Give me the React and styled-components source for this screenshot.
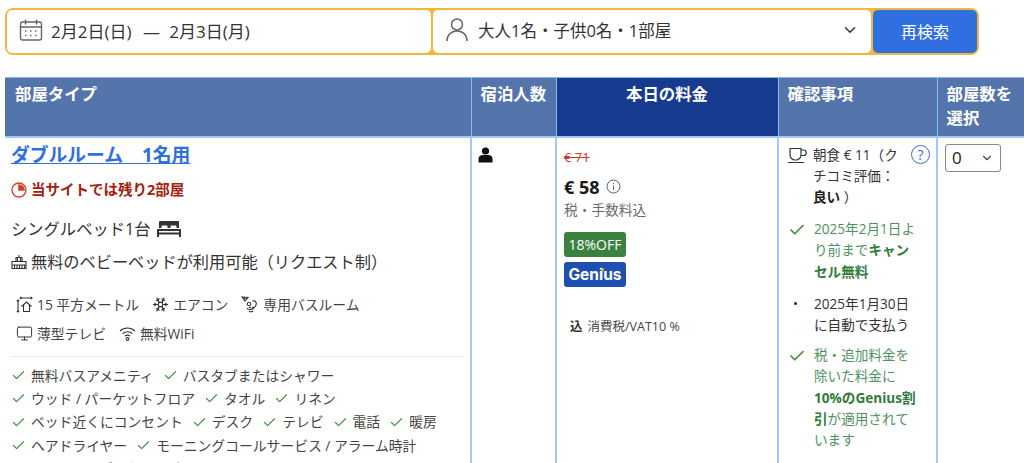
import styled, { createGlobalStyle } from "styled-components";
import { Monitor, Snowflake, ChevronDown, Check } from "lucide-react";

const GlobalStyle = createGlobalStyle`
  html, body {
    margin: 0;
    height: 463px;
    overflow: hidden;
    background: #fff;
  }
  body {
    font-family: "Open Sans", "Noto Sans CJK JP", sans-serif;
    color: #333;
    font-size: 14px;
  }
`;

const Page = styled.div`
  padding: 8px 0 0 5px;
`;

const SearchBar = styled.form`
  display: grid;
  grid-template-columns: 424px 438px 104px;
  gap: 2px;
  width: 974px;
  height: 47px;
  box-sizing: border-box;
  padding: 2px;
  background: #f4b63f;
  border-radius: 8px;
  margin-bottom: 22px;
`;

const Field = styled.div`
  display: flex;
  align-items: center;
  gap: 8px;
  padding: 0 12px 3px;
  background: #fff;
  border-radius: 5px;
  font-size: 17px;
  color: #333;
  white-space: pre;
`;

const Dash = styled.span`
  margin: 0 5px 0 7px;
`;

const GuestField = styled(Field)`
  padding-right: 12px;
  gap: 9px;
  font-size: 16.5px;

  svg:last-child {
    margin-left: auto;
  }
`;

const SearchButton = styled.button`
  border: 0;
  border-radius: 5px;
  background: #2f6fdf;
  color: #fff;
  font: inherit;
  font-size: 16px;
  padding: 0 0 2px;
`;

const Table = styled.table`
  table-layout: fixed;
  width: 1024px;
  border-collapse: collapse;
  border-top: 1px solid #8db4e8;
`;

const Col = styled.col`
  width: ${(p) => p.$w}px;
`;

const Th = styled.th`
  height: 59px;
  box-sizing: border-box;
  padding: 4px 9px;
  vertical-align: top;
  text-align: ${(p) => (p.$today ? "center" : "left")};
  background: ${(p) => (p.$today ? "#173b8f" : "#5475ac")};
  color: #fff;
  font-size: 16.4px;
  line-height: 24px;
  font-weight: 700;
  border-right: 1px solid #8dbcf5;
  border-bottom: 2px solid #a3c9f7;
`;

const FirstTh = styled(Th)`
  padding-left: 10px;
`;

const Td = styled.td`
  vertical-align: top;
  padding: 6px 6px 0;
  border-right: 2px solid #a3c9f7;
`;

const RoomLink = styled.a`
  display: block;
  color: #2f6fdf;
  font-size: 18.8px;
  font-weight: 700;
  line-height: 22px;
  text-decoration: underline;
`;

const Scarcity = styled.div`
  display: flex;
  align-items: center;
  gap: 4px;
  margin-top: 14px;
  color: #a3200c;
  font-weight: 700;
  font-size: 14.5px;
  line-height: 20px;
`;

const BedRow = styled.div`
  display: flex;
  align-items: center;
  gap: 6px;
  margin-top: 17px;
  font-size: 16.3px;
  line-height: 24px;
`;

const CribRow = styled.div`
  display: flex;
  align-items: center;
  gap: 4px;
  margin-top: 9px;
  font-size: 16.2px;
  line-height: 24px;
`;

const Facilities = styled.div`
  display: flex;
  flex-wrap: wrap;
  width: 400px;
  gap: 9px 13px;
  margin: 21px 0 0 5px;
  font-size: 13.8px;
  line-height: 20px;
  color: #444;
`;

const Facility = styled.span`
  display: flex;
  align-items: center;
  gap: 4px;
`;

const Divider = styled.hr`
  margin: 12px 0 7px;
  border: 0;
  border-top: 1px solid #e7e7e7;
`;

const Amenities = styled.ul`
  display: flex;
  flex-wrap: wrap;
  list-style: none;
  margin: 0;
  padding: 0;
  gap: 0 9px;
  font-size: 13.8px;
  line-height: 23.4px;
  color: #444;
`;

const Amenity = styled.li`
  display: flex;
  align-items: center;
  gap: 5px;
  color: #444;

  svg {
    color: #3e8a3e;
  }
`;

const PersonIcon = styled.svg`
  display: block;
  margin: 3px 0 0;
`;

const PriceCell = styled(Td)`
  padding-left: 7px;
`;

const OldPrice = styled.div`
  margin-top: 3px;
  color: #c9392c;
  font-size: 13px;
  line-height: 20px;
  text-decoration: line-through;
`;

const Price = styled.div`
  display: flex;
  align-items: center;
  gap: 6px;
  margin-top: 6px;
  color: #1a1a1a;
  font-size: 18px;
  font-weight: 700;
  line-height: 28px;
`;

const Included = styled.div`
  margin-top: -1px;
  color: #6b6b6b;
  font-size: 13.7px;
  line-height: 20px;
`;

const Badge = styled.div`
  position: relative;
  display: flex;
  align-items: center;
  justify-content: center;
  width: 62px;
  height: 25px;
  margin-top: ${(p) => p.$top}px;
  background: ${(p) => p.$bg};
  color: #fff;
  border-radius: 3px;
  font-family: ${(p) => (p.$brand ? "Inter, sans-serif" : "inherit")};
  font-size: ${(p) => (p.$brand ? 15.5 : 14)}px;
  font-weight: ${(p) => (p.$brand ? 700 : 400)};
`;

const GeniusDot = styled.span`
  position: absolute;
  top: 6px;
  left: 37px;
  width: 3px;
  height: 3px;
  border-radius: 50%;
  background: #febb02;
`;

const Vat = styled.div`
  display: flex;
  align-items: center;
  gap: 5px;
  margin: 31px 0 0 6px;
  font-size: 12.5px;
  line-height: 18px;
  color: #444;

  b {
    color: #333;
  }
`;

const Condition = styled.div`
  display: grid;
  grid-template-columns: 26px 1fr;
  width: 131px;
  margin: ${(p) => p.$top}px 0 0 1px;
  color: ${(p) => (p.$green ? "#4f9160" : "#333")};
  font-size: 13.6px;
  line-height: 21.4px;

  b {
    color: ${(p) => (p.$green ? "#2f7d3a" : "#222")};
  }
`;

const Marker = styled.span`
  display: flex;
  justify-content: flex-start;
  padding-top: 3px;
  color: #3e8a3e;
`;

const Bullet = styled.span`
  width: 3px;
  height: 3px;
  margin: 9px 0 0 6px;
  background: #222;
  border-radius: 50%;
`;

const Help = styled.span`
  position: absolute;
  top: 7px;
  left: 132px;
  width: 19px;
  height: 19px;
  box-sizing: border-box;
  display: flex;
  align-items: center;
  justify-content: center;
  border: 1px solid #2f6fdf;
  border-radius: 50%;
  color: #2f6fdf;
  font-size: 14px;
`;

const ConditionsCell = styled(Td)`
  position: relative;
  padding-left: 8px;
`;

const SelectCell = styled(Td)`
  padding-left: 7px;
`;

const RoomSelect = styled.div`
  display: flex;
  align-items: center;
  justify-content: space-between;
  width: 56px;
  height: 28px;
  box-sizing: border-box;
  padding: 0 6px;
  border: 1px solid #888;
  border-radius: 3px;
  color: #222;
  font-size: 17px;
`;

const amenityLines = [
  "無料バスアメニティ",
  "バスタブまたはシャワー",
  "ウッド / パーケットフロア",
  "タオル",
  "リネン",
  "ベッド近くにコンセント",
  "デスク",
  "テレビ",
  "電話",
  "暖房",
  "ヘアドライヤー",
  "モーニングコールサービス / アラーム時計",
  "ワードローブ / クローゼット",
];

const CalendarIcon = () => (
  <svg width="24" height="24" viewBox="0 0 24 24" fill="none" stroke="#666" strokeWidth="1.4">
    <rect x="1.5" y="4" width="21" height="18" rx="2" />
    <path d="M1.5 9h21M6.5 1.5v5M17.5 1.5v5" />
    <path d="M6 13h1.5M11 13h1.5M16 13h1.500M6 17.5h1.5M11 17.5h1.5M16 17.5h1.5" strokeWidth="1.6" />
  </svg>
);

const UserIcon = () => (
  <svg width="24" height="26" viewBox="0 0 24 26" fill="none" stroke="#666" strokeWidth="1.5">
    <circle cx="12" cy="7.5" r="5.5" />
    <path d="M2 24c0-6 4-10 10-10s10 4 10 10" />
  </svg>
);

const PieIcon = () => (
  <svg width="16" height="16" viewBox="0 0 16 16">
    <circle cx="8" cy="8" r="7" fill="none" stroke="#d4402b" strokeWidth="1.3" />
    <path d="M8 3a5 5 0 0 1 5 5H8z" fill="#d4402b" stroke="#d4402b" strokeWidth="1.6" />
  </svg>
);

const BedIcon = () => (
  <svg width="24" height="18" viewBox="0 0 24 18" fill="#333">
    <path d="M3 1h18a1 1 0 0 1 1 1v6h-2.500V6.500a1 1 0 0 0-1-1h-4a1 1 0 0 0-1 1V8h-3V6.500a1 1 0 0 0-1-1h-4a1 1 0 0 0-1 1V8H2V2a1 1 0 0 1 1-1z" />
    <path d="M1 9h22a1 1 0 0 1 1 1v7h-2v-2.500H2V17H0v-7a1 1 0 0 1 1-1zm1 2v1.500h20V11z" />
  </svg>
);

const CribIcon = () => (
  <svg width="16" height="16" viewBox="0 0 16 16" fill="none" stroke="#333" strokeWidth="1.1">
    <path d="M1 7.5h14v7H1zM1 11h14M3.500 11v3.500M6 11v3.500M8.500 11v3.500M11 11v3.500M13.500 11v3.500" />
    <path d="M5 7.500V3.500h6v4M8 1v2.500M6.500 3.500v4M9.500 3.500v4" />
  </svg>
);

const AreaIcon = () => (
  <svg width="17" height="17" viewBox="0 0 17 17" fill="none" stroke="#333" strokeWidth="1.1">
    <path d="M4 2h12M5.300 0.800 4 2l1.300 1.200M14.700 0.800 16 2l-1.300 1.200" />
    <path d="M2 4v12M0.800 5.200 2 4l1.200 1.200M0.800 14.800 2 16l1.200-1.200" />
    <path d="M5.500 10.500 10.500 6l5 4.500M7.500 9v6.500h6V9" />
  </svg>
);

const BathIcon = () => (
  <svg width="18" height="18" viewBox="0 0 18 18" fill="none" stroke="#333" strokeWidth="1.1">
    <path d="M1 1l6 .5-3 3.500zM3 2l1 1M5 2l.5 1" />
    <circle cx="8" cy="8" r="1.800" />
    <path d="M11 5c3-1 5 1 4 4s-3 3-4 2M6 12c1 2 5 2 7 0M8 15c1 1 3 1 4 0M8 11l2 1" />
  </svg>
);

const WifiIcon = () => (
  <svg width="17" height="17" viewBox="0 0 17 17" fill="none" stroke="#333" strokeWidth="1.1">
    <path d="M1 6c4.200-4 10.800-4 15 0M3.500 8.700c2.800-2.600 7.200-2.600 10 0M6 11.200c1.400-1.200 3.600-1.200 5 0" />
    <circle cx="8.500" cy="14" r="1.400" />
  </svg>
);

const CupIcon = () => (
  <svg width="20" height="17" viewBox="0 0 20 17" fill="none" stroke="#333" strokeWidth="1.2">
    <path d="M3 1.500h11v6.500a5 5 0 0 1-5 5H8a5 5 0 0 1-5-5zM14 3h2.500a2 2 0 0 1 0 5.500H14M1 15.500h16" />
  </svg>
);

const App = () => (
  <>
    <GlobalStyle />
    <Page>
      <SearchBar>
        <Field>
          <CalendarIcon />
          <span>
            2月2日(日) <Dash>—</Dash> 2月3日(月)
          </span>
        </Field>
        <GuestField>
          <UserIcon />
          大人1名・子供0名・1部屋
          <ChevronDown size={18} color="#333" />
        </GuestField>
        <SearchButton type="button">再検索</SearchButton>
      </SearchBar>

      <Table>
        <colgroup>
          <Col $w={466} />
          <Col $w={85} />
          <Col $w={222} />
          <Col $w={159} />
          <Col $w={92} />
        </colgroup>
        <thead>
          <tr>
            <FirstTh>部屋タイプ</FirstTh>
            <Th>宿泊人数</Th>
            <Th $today>本日の料金</Th>
            <Th>確認事項</Th>
            <Th>部屋数を選択</Th>
          </tr>
        </thead>
        <tbody>
          <tr>
            <Td>
              <RoomLink href="#">ダブルルーム　1名用</RoomLink>
              <Scarcity>
                <PieIcon />
                当サイトでは残り2部屋
              </Scarcity>
              <BedRow>
                シングルベッド1台
                <BedIcon />
              </BedRow>
              <CribRow>
                <CribIcon />
                無料のベビーベッドが利用可能（リクエスト制）
              </CribRow>
              <Facilities>
                <Facility>
                  <AreaIcon />
                  15 平方メートル
                </Facility>
                <Facility>
                  <Snowflake size={17} color="#333" strokeWidth={1.6} />
                  エアコン
                </Facility>
                <Facility>
                  <BathIcon />
                  専用バスルーム
                </Facility>
                <Facility>
                  <Monitor size={17} color="#333" strokeWidth={1.4} />
                  薄型テレビ
                </Facility>
                <Facility>
                  <WifiIcon />
                  無料WiFi
                </Facility>
              </Facilities>
              <Divider />
              <Amenities>
                {amenityLines.map((a) => (
                  <Amenity key={a}>
                    <Check size={15} strokeWidth={1.7} />
                    {a}
                  </Amenity>
                ))}
              </Amenities>
            </Td>
            <Td>
              <PersonIcon width="15" height="16" viewBox="0 0 15 16" fill="#111">
                <circle cx="7.5" cy="4" r="3.6" />
                <path d="M0.5 15.5v-3.5c0-2.5 2-4 4-4h6c2 0 4 1.500 4 4v3.500z" />
              </PersonIcon>
            </Td>
            <PriceCell>
              <OldPrice>€ 71</OldPrice>
              <Price>
                € 58
                <svg width="15" height="15" viewBox="0 0 15 15" fill="none" stroke="#666">
                  <circle cx="7.5" cy="7.5" r="6.5" />
                  <path d="M7.500 6.500v4.500M7.500 4v1.200" />
                </svg>
              </Price>
              <Included>税・手数料込</Included>
              <Badge $top={12} $bg="#3b8241">18%OFF</Badge>
              <Badge $top={5} $bg="#1f4fb0" $brand>
                Genius
                <GeniusDot />
              </Badge>
              <Vat>
                <b>込</b>
                消費税/VAT10 %
              </Vat>
            </PriceCell>
            <ConditionsCell>
              <Condition>
                <Marker>
                  <CupIcon />
                </Marker>
                <span>
                  朝食 € 11（ク
                  <br />
                  チコミ評価：
                  <br />
                  <b>良い</b> ）
                </span>
              </Condition>
              <Help>?</Help>
              <Condition $green $top={10}>
                <Marker>
                  <Check size={18} strokeWidth={2.2} />
                </Marker>
                <span>
                  2025年2月1日より前まで<b>キャンセル無料</b>
                </span>
              </Condition>
              <Condition $top={11}>
                <Bullet />
                <span>2025年1月30日に自動で支払う</span>
              </Condition>
              <Condition $green $top={8}>
                <Marker>
                  <Check size={18} strokeWidth={2.2} />
                </Marker>
                <span>
                  税・追加料金を除いた料金に<b>10%のGenius割引</b>が適用されています
                </span>
              </Condition>
            </ConditionsCell>
            <SelectCell>
              <RoomSelect>
                0
                <ChevronDown size={14} color="#444" />
              </RoomSelect>
            </SelectCell>
          </tr>
        </tbody>
      </Table>
    </Page>
  </>
);

export default App;
